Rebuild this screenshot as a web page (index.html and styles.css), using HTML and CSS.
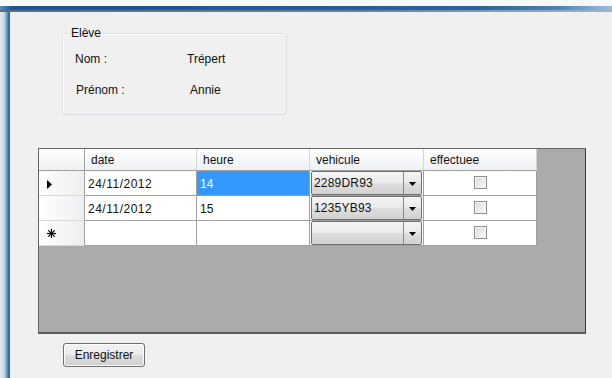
FILE: index.html
```html
<!DOCTYPE html>
<html>
<head>
<meta charset="utf-8">
<link rel="stylesheet" href="styles.css">
</head>
<body>
<div class="window">
  <div class="titlestrip"><div class="titleblue"></div><div class="titleline"></div></div>
  <div class="main">
    <div class="leftframe"></div>
    <div class="content">
      <div class="groupbox">
        <span class="groupbox-title">Elève</span>
        <div class="gb-row"><span class="gb-label">Nom :</span><span class="gb-value">Trépert</span></div>
        <div class="gb-row"><span class="gb-label gb-label2">Prénom :</span><span class="gb-value gb-value2">Annie</span></div>
      </div>

      <div class="grid">
        <div class="gtable">
          <div class="hcell rowhead"></div>
          <div class="hcell">date</div>
          <div class="hcell">heure</div>
          <div class="hcell">vehicule</div>
          <div class="hcell">effectuee</div>

          <div class="rcell"><svg class="rowarrow" width="6" height="9" viewBox="0 0 6 9"><polygon points="0,0 5,4.5 0,9" fill="#000"/></svg></div>
          <div class="cell date">24/11/2012</div>
          <div class="cell selected">14</div>
          <div class="cell combocell"><div class="combo"><span class="combo-text">2289DR93</span><span class="combo-btn"><svg width="7" height="4" viewBox="0 0 7 4"><polygon points="0,0 7,0 3.5,4" fill="#000"/></svg></span></div></div>
          <div class="cell chkcell"><span class="chk"></span></div>

          <div class="rcell"></div>
          <div class="cell date">24/11/2012</div>
          <div class="cell">15</div>
          <div class="cell combocell"><div class="combo"><span class="combo-text">1235YB93</span><span class="combo-btn"><svg width="7" height="4" viewBox="0 0 7 4"><polygon points="0,0 7,0 3.5,4" fill="#000"/></svg></span></div></div>
          <div class="cell chkcell"><span class="chk"></span></div>

          <div class="rcell"><svg class="star" width="9" height="9" viewBox="0 0 9 9"><g stroke="#000" stroke-width="1.2"><line x1="4.5" y1="0" x2="4.5" y2="9"/><line x1="0" y1="4.5" x2="9" y2="4.5"/><line x1="1.3" y1="1.3" x2="7.7" y2="7.7"/><line x1="7.7" y1="1.3" x2="1.3" y2="7.7"/></g></svg></div>
          <div class="cell"></div>
          <div class="cell"></div>
          <div class="cell combocell"><div class="combo"><span class="combo-text"></span><span class="combo-btn"><svg width="7" height="4" viewBox="0 0 7 4"><polygon points="0,0 7,0 3.5,4" fill="#000"/></svg></span></div></div>
          <div class="cell chkcell"><span class="chk"></span></div>
        </div>
      </div>

      <button class="btn">Enregistrer</button>
    </div>
  </div>
</div>
</body>
</html>
```

FILE: styles.css
```css
html, body {
  margin: 0;
  padding: 0;
  background: #f0f0f0;
}
body {
  width: 612px;
  height: 378px;
  overflow: hidden;
  font-family: "Liberation Sans", Arial, sans-serif;
  font-size: 12px;
  color: #111111;
}
.window {
  display: flex;
  flex-direction: column;
  width: 612px;
  height: 378px;
}
.titlestrip {
  height: 12px;
  background: #f7f8fa;
  display: flex;
  flex-direction: column;
  justify-content: flex-end;
  flex: none;
}
.titleblue {
  height: 4px;
  background: linear-gradient(to right, #5e8cb8 0px, #1d5597 12px, #1d5597 150px, #2a62a2 480px, #4f82b9 560px, #8fb2d5 600px, #9bbbd9 612px);
}
.titleline {
  height: 2px;
  background: linear-gradient(to right, #5b6d80, #6f8092 60%, #a0b2c4);
}
.main {
  flex: 1;
  display: flex;
}
.leftframe {
  width: 10px;
  flex: none;
  background: linear-gradient(to right, #e3ebe8 0px, #c9dbe4 4px, #7fb0de 6px, #3f7fc0 8px, #53626f 9px, #53626f 10px);
}
.content {
  flex: 1;
  display: flex;
  flex-direction: column;
  align-items: flex-start;
}

/* group box */
.groupbox {
  position: relative;
  margin: 21px 0 0 52px;
  width: 225px;
  height: 82px;
  box-sizing: border-box;
  border: 1px solid #d8dfe4;
  border-radius: 3px;
  box-shadow: inset 1px 1px 0 #ffffff;
  padding: 18px 0 0 12px;
  display: flex;
  flex-direction: column;
  gap: 17px;
}
.groupbox-title {
  position: absolute;
  left: 6px;
  top: -8px;
  padding: 0 2px;
  background: #f0f0f0;
  line-height: 14px;
}
.gb-row {
  display: flex;
  line-height: 14px;
}
.gb-label {
  width: 112px;
}
.gb-label2 {
  margin-left: 1px;
  width: 113px;
}
.gb-value2 {
  margin-left: 1px;
}

/* data grid */
.grid {
  margin: 33px 0 0 28px;
  width: 548px;
  height: 186px;
  box-sizing: border-box;
  border: 1px solid #646464;
  border-right-color: #3a3a3a;
  border-bottom: 2px solid #5a5a5a;
  background: #ababab;
}
.gtable {
  display: grid;
  grid-template-columns: 46px 112px 113px 114px 113px;
  grid-template-rows: 22px 25px 25px 25px;
}
.hcell {
  box-sizing: border-box;
  background: linear-gradient(to bottom, #ffffff 0%, #f7f8fa 50%, #eef0f3 100%);
  border-right: 1px solid #d5d5d5;
  border-bottom: 1px solid #a0a0a0;
  padding: 4px 0 0 6px;
  line-height: 14px;
}
.hcell.rowhead {
  border-right-color: #a0a0a0;
}
.rcell {
  box-sizing: border-box;
  background: linear-gradient(to right, #ffffff 0%, #f4f5f7 60%, #eceef0 100%);
  border-right: 1px solid #a0a0a0;
  border-bottom: 1px solid #d9d9d9;
  display: flex;
  align-items: center;
  padding-left: 8px;
}
.rowarrow {
  margin-top: 2px;
}
.star {
  margin-top: 1px;
}
.cell {
  box-sizing: border-box;
  background: #ffffff;
  border-right: 1px solid #a0a0a0;
  border-bottom: 1px solid #a0a0a0;
  padding: 6px 0 0 3px;
  line-height: 14px;
}
.cell.date {
  letter-spacing: 0.5px;
}
.cell.selected {
  background: #3399ff;
  color: #ffffff;
}
.combocell {
  padding: 0 1px 1px 1px;
  background: #ffffff;
}
.combo {
  height: 24px;
  box-sizing: border-box;
  border: 1px solid #707070;
  border-radius: 2px;
  background: linear-gradient(to bottom, #f4f4f4 0%, #ececec 45%, #dddddd 55%, #d2d2d2 100%);
  display: flex;
}
.combo-text {
  flex: 1;
  padding: 4px 0 0 2px;
  line-height: 14px;
  letter-spacing: 0.2px;
}
.combo-btn {
  width: 18px;
  border-left: 1px solid #8a8a8a;
  display: flex;
  align-items: center;
  justify-content: center;
  padding-top: 2px;
  box-sizing: border-box;
}
.chkcell {
  display: flex;
  justify-content: center;
  padding: 5px 0 0 0;
}
.chk {
  display: block;
  width: 13px;
  height: 13px;
  box-sizing: border-box;
  border: 1px solid #8f8f8f;
  background: linear-gradient(135deg, #d8d8d8 0%, #eeeeee 60%, #fafafa 100%);
  box-shadow: inset 0 0 0 1px #f4f4f4;
}

/* button */
.btn {
  margin: 9px 0 0 53px;
  width: 82px;
  height: 24px;
  box-sizing: border-box;
  border: 1px solid #707070;
  border-radius: 3px;
  background: linear-gradient(to bottom, #f2f2f2 0%, #ebebeb 48%, #dddddd 52%, #cfcfcf 100%);
  box-shadow: inset 0 0 0 1px #fbfbfb;
  font-family: "Liberation Sans", Arial, sans-serif;
  font-size: 12px;
  color: #111111;
  padding: 0;
  line-height: 14px;
}
```
